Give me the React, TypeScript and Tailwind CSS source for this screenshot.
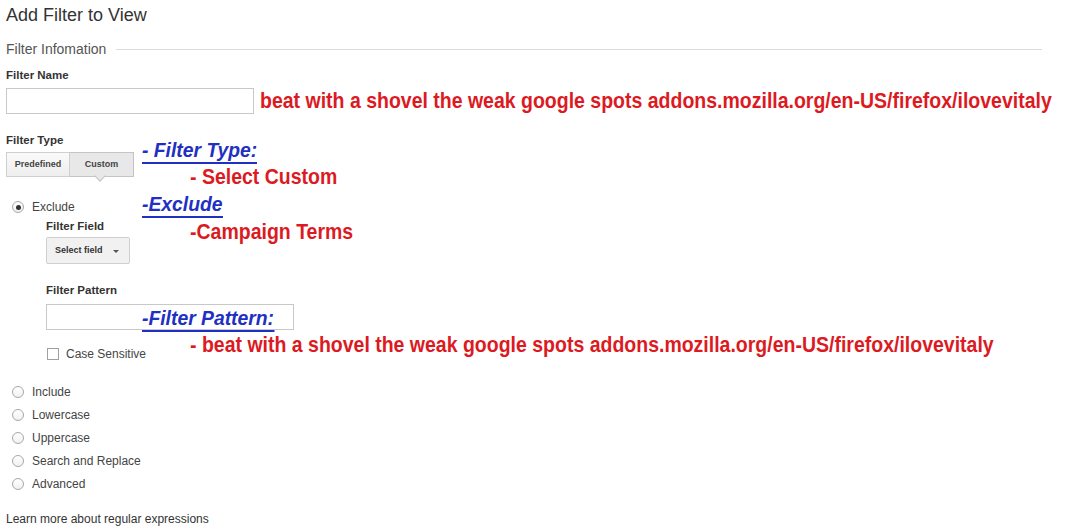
import type { ReactNode } from "react";

const OTHER_TYPES = ["Include", "Lowercase", "Uppercase", "Search and Replace", "Advanced"];

function Radio({ checked, label }: { checked?: boolean; label: string }) {
  return (
    <div className="flex h-[16px] items-center">
      <span className="ml-[6px] flex h-[12px] w-[12px] items-center justify-center rounded-full border border-[#a8a8a8] bg-gradient-to-b from-white to-[#f1f1f1]">
        {checked && <span className="h-[5px] w-[5px] rounded-full bg-[#333]" />}
      </span>
      <span className="ml-[8px] text-[12px] text-[#444]">{label}</span>
    </div>
  );
}

function Label({ children }: { children: ReactNode }) {
  return <div className="flex h-[16px] items-center text-[11.5px] font-bold text-[#333]">{children}</div>;
}

function Note({ className, blue, children }: { className: string; blue?: boolean; children: ReactNode }) {
  return (
    <span
      className={
        "absolute origin-left whitespace-nowrap font-bold leading-[24px] " +
        (blue
          ? "scale-x-[0.92] border-b-2 border-[#2130c2] text-[21px] italic text-[#2130c2] "
          : "scale-x-[0.886] text-[22px] text-[#dc1a1f] ") +
        className
      }
    >
      {children}
    </span>
  );
}

export default function App() {
  return (
    <div className="relative h-[530px] w-[1080px] overflow-hidden bg-white font-['Liberation_Sans',Arial,sans-serif] text-[#333]">
      <div className="px-[6px]">
        <div className="mt-[3px] h-[24px] text-[18px] leading-[24px] text-[#333]">Add Filter to View</div>

        <div className="mt-[13px] mr-[32px] flex h-[18px] items-center gap-[10px]">
          <span className="text-[14px] text-[#555]">Filter Infomation</span>
          <span className="h-px flex-1 bg-[#dcdcdc]" />
        </div>

        <div className="mt-[10px]">
          <Label>Filter Name</Label>
        </div>
        <div className="mt-[4px] h-[26px] w-[248px] border border-[#c8c8c8] bg-white" />

        <div className="mt-[19px]">
          <Label>Filter Type</Label>
        </div>
        <div className="relative mt-[3px] flex h-[25px] w-[128px] text-[9px] font-bold text-[#444]">
          <div className="flex w-[64px] items-center justify-center border border-[#cfcfcf] bg-gradient-to-b from-[#fafafa] to-[#eeeeee]">
            Predefined
          </div>
          <div className="flex w-[64px] items-center justify-center border border-l-0 border-[#c4c4c4] bg-[#e8e8e8]">
            Custom
          </div>
          <span className="absolute left-[90px] top-[20px] h-[8px] w-[8px] rotate-45 border-r border-b border-[#c4c4c4] bg-[#e8e8e8]" />
        </div>

        <div className="mt-[22px]">
          <Radio checked label="Exclude" />
        </div>
        <div className="ml-[40px]">
          <div className="mt-[4px]">
            <Label>Filter Field</Label>
          </div>
          <div className="mt-[2px] flex h-[27px] w-[84px] items-center rounded-[2px] border border-[#d0d0d0] bg-[#f1f1f1] pl-[8px] text-[9px] font-bold text-[#333]">
            Select field
            <span className="ml-[10px] mt-[2px] h-0 w-0 border-x-[3px] border-t-[3px] border-x-transparent border-t-[#555]" />
          </div>

          <div className="mt-[19px]">
            <Label>Filter Pattern</Label>
          </div>
          <div className="mt-[5px] h-[26px] w-[248px] border border-[#c8c8c8] bg-white" />

          <div className="mt-[17px] flex h-[14px] items-center">
            <span className="ml-[1px] h-[12px] w-[12px] border border-[#a0a0a0] bg-white" />
            <span className="ml-[7px] text-[12px] text-[#444]">Case Sensitive</span>
          </div>
        </div>

        <div className="mt-[23px] flex flex-col gap-[7px]">
          {OTHER_TYPES.map((t) => (
            <Radio key={t} label={t} />
          ))}
        </div>

        <div className="mt-[19px] flex h-[16px] items-center text-[12px] text-[#333]">
          Learn more about regular expressions
        </div>
      </div>

      <Note className="left-[260px] top-[89px]">
        beat with a shovel the weak google spots addons.mozilla.org/en-US/firefox/ilovevitaly
      </Note>
      <Note blue className="left-[142px] top-[138px]">
        - Filter Type:
      </Note>
      <Note className="left-[190px] top-[165px]">- Select Custom</Note>
      <Note blue className="left-[142px] top-[192px]">
        -Exclude
      </Note>
      <Note className="left-[190px] top-[220px]">-Campaign Terms</Note>
      <Note blue className="left-[142px] top-[306px]">
        -Filter Pattern:
      </Note>
      <Note className="left-[190px] top-[333px]">
        - beat with a shovel the weak google spots addons.mozilla.org/en-US/firefox/ilovevitaly
      </Note>
    </div>
  );
}
